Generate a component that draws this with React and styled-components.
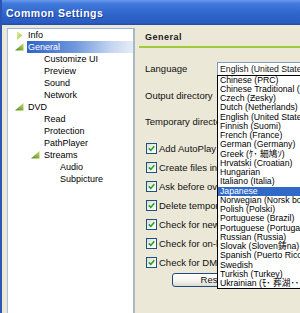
import React from "react";
import styled, { createGlobalStyle } from "styled-components";

const GlobalStyle = createGlobalStyle`
  html, body {
    margin: 0;
    padding: 0;
    background: #ebe8d7;
  }
  body {
    font-family: "Liberation Sans", "Noto Sans CJK JP", sans-serif;
  }
`;

const tree = [
  { label: "Info", level: 0, icon: "closed" },
  { label: "General", level: 0, icon: "open", selected: true },
  { label: "Customize UI", level: 1 },
  { label: "Preview", level: 1 },
  { label: "Sound", level: 1 },
  { label: "Network", level: 1 },
  { label: "DVD", level: 0, icon: "open" },
  { label: "Read", level: 1 },
  { label: "Protection", level: 1 },
  { label: "PathPlayer", level: 1 },
  { label: "Streams", level: 1, icon: "open" },
  { label: "Audio", level: 2 },
  { label: "Subpicture", level: 2 },
];

const languages = [
  "Chinese (PRC)",
  "Chinese Traditional (Taiwan)",
  "Czech (Ƶesky)",
  "Dutch (Netherlands)",
  "English (United States)",
  "Finnish (Suomi)",
  "French (France)",
  "German (Germany)",
  "Greek (ｹ･ 細鳩ｿ)",
  "Hrvatski (Croatian)",
  "Hungarian",
  "Italiano (Italia)",
  "Japanese",
  "Norwegian (Norsk bokmål)",
  "Polish (Polski)",
  "Portuguese (Brazil)",
  "Portuguese (Portugal)",
  "Russian (Russia)",
  "Slovak (Sloven鋳na)",
  "Spanish (Puerto Rico)",
  "Swedish",
  "Turkish (Turkey)",
  "Ukrainian (ﾓ･ 葬湖･･",
];

const checks = [
  "Add AutoPlay handler",
  "Create files in temporary directory",
  "Ask before overwriting",
  "Delete temporary files",
  "Check for new version",
  "Check for on-line updates",
  "Check for DMA",
];

const TreeIcon = ({ kind }) => {
  if (kind === "closed") {
    return (
      <svg width="6" height="9" viewBox="0 0 6 9">
        <defs>
          <linearGradient id="gClosed" x1="0" y1="0" x2="1" y2="1">
            <stop offset="0" stopColor="#e2eea8" />
            <stop offset="1" stopColor="#a6c640" />
          </linearGradient>
        </defs>
        <polygon points="0,0 5.5,4.5 0,9" fill="url(#gClosed)" />
      </svg>
    );
  }
  return (
    <svg width="9" height="8" viewBox="0 0 9 8">
      <defs>
        <linearGradient id="gOpen" x1="1" y1="0" x2="0" y2="1">
          <stop offset="0" stopColor="#c4dc70" />
          <stop offset="1" stopColor="#4f8a18" />
        </linearGradient>
      </defs>
      <polygon points="8.5,0 8.5,7.5 0,7.5" fill="url(#gOpen)" />
    </svg>
  );
};

const App = () => {
  return (
    <>
      <GlobalStyle />
      <Window>
        <TitleBar>Common Settings</TitleBar>
        <Body>
          <TreePanel>
            {tree.map((item) => (
              <TreeRow key={item.label} level={item.level}>
                <IconSlot>{item.icon && <TreeIcon kind={item.icon} />}</IconSlot>
                <TreeLabel selected={item.selected}>{item.label}</TreeLabel>
              </TreeRow>
            ))}
          </TreePanel>
          <Content>
            <Header>General</Header>
            <Rule />
            <Form>
              <FieldRow>
                <FieldLabel>Language</FieldLabel>
                <Combo>
                  English (United States)
                  <DropList>
                    {languages.map((lang) => (
                      <DropItem key={lang} selected={lang === "Japanese"}>
                        {lang}
                      </DropItem>
                    ))}
                  </DropList>
                </Combo>
              </FieldRow>
              <FieldRow>
                <FieldLabel>Output directory</FieldLabel>
              </FieldRow>
              <FieldRow>
                <FieldLabel>Temporary directory</FieldLabel>
              </FieldRow>
              <CheckList>
                {checks.map((c) => (
                  <CheckRow key={c}>
                    <Box>
                      <svg width="7" height="7" viewBox="0 0 7 7">
                        <path
                          d="M0.8 3.4 L2.8 5.4 L6.3 1.2"
                          fill="none"
                          stroke="#22a322"
                          strokeWidth="1.6"
                        />
                      </svg>
                    </Box>
                    <CheckText>{c}</CheckText>
                  </CheckRow>
                ))}
              </CheckList>
              <ResetButton>Reset</ResetButton>
            </Form>
          </Content>
        </Body>
      </Window>
    </>
  );
};

const Window = styled.div`
  width: 300px;
  height: 313px;
  overflow: hidden;
  box-sizing: border-box;
  border-left: 2px solid #2d53b5;
  background: #ebe8d7;
  display: flex;
  flex-direction: column;
`;

const TitleBar = styled.div`
  height: 25px;
  flex: none;
  display: flex;
  align-items: center;
  padding-left: 4px;
  color: #ffffff;
  font-size: 10.5px;
  font-weight: bold;
  letter-spacing: 0.5px;
  text-shadow: 1px 1px 0 #1b3f95;
  background: linear-gradient(
    to bottom,
    #6a9ae8 0%,
    #4079dc 15%,
    #2f65cc 55%,
    #2a5cc2 90%,
    #1f4aa8 100%
  );
`;

const Body = styled.div`
  flex: 1;
  display: flex;
  padding: 3px 0 0 5px;
  min-height: 0;
`;

const TreePanel = styled.div`
  width: 128px;
  flex: none;
  box-sizing: border-box;
  background: #ffffff;
  border-top: 1px solid #98b4dc;
  border-left: 1px solid #a6bee0;
  border-right: 2px solid #aab7c4;
  padding-top: 0;
`;

const TreeRow = styled.div`
  display: flex;
  align-items: center;
  height: 12px;
  padding-left: ${(p) => p.level * 16 + 4}px;
`;

const IconSlot = styled.div`
  width: 15px;
  flex: none;
  display: flex;
  justify-content: center;
  align-items: center;
`;

const TreeLabel = styled.div`
  flex: 1;
  height: 12px;
  line-height: 12px;
  padding-left: 1px;
  font-size: 9px;
  white-space: nowrap;
  color: ${(p) => (p.selected ? "#ffffff" : "#000000")};
  background: ${(p) =>
    p.selected
      ? "linear-gradient(to right, #2f63c8 0%, #6f97dc 45%, #c6d6f0 80%, #e4ecf8 100%)"
      : "transparent"};
`;

const Content = styled.div`
  flex: 1;
  min-width: 0;
  padding-left: 4px;
  display: flex;
  flex-direction: column;
`;

const Header = styled.div`
  height: 18px;
  display: flex;
  align-items: center;
  padding-left: 6px;
  font-size: 9px;
  font-weight: bold;
  letter-spacing: 0.5px;
  color: #1a1a1a;
`;

const Rule = styled.div`
  height: 2px;
  background: #9fcb3a;
`;

const Form = styled.div`
  padding: 14px 0 0 6px;
  display: flex;
  flex-direction: column;
  font-size: 9.5px;
  color: #111;
`;

const FieldRow = styled.div`
  display: flex;
  align-items: center;
  height: 13px;
  margin-bottom: 13.5px;
`;

const FieldLabel = styled.div`
  width: 72px;
  flex: none;
  overflow: hidden;
  white-space: nowrap;
`;

const Combo = styled.div`
  position: relative;
  width: 100px;
  flex: none;
  height: 14px;
  box-sizing: border-box;
  border: 1px solid #7f9db9;
  background: #ffffff;
  padding-left: 2px;
  font-size: 8.7px;
  line-height: 12px;
  white-space: nowrap;
`;

const DropList = styled.div`
  position: absolute;
  top: 100%;
  left: -1px;
  z-index: 2;
  width: 120px;
  border: 1px solid #000000;
  background: #ffffff;
  font-size: 8.7px;
`;

const DropItem = styled.div`
  height: 9.25px;
  line-height: 9.25px;
  padding-left: 2px;
  white-space: nowrap;
  color: ${(p) => (p.selected ? "#ffffff" : "#000000")};
  background: ${(p) => (p.selected ? "#3169c6" : "transparent")};
`;

const CheckList = styled.div`
  display: flex;
  flex-direction: column;
  gap: 6px;
`;

const CheckRow = styled.div`
  display: flex;
  align-items: center;
  height: 13px;
  white-space: nowrap;
`;

const Box = styled.div`
  width: 11px;
  height: 11px;
  margin-left: 1px;
  box-sizing: border-box;
  border: 1px solid #1c5180;
  background: linear-gradient(135deg, #dcdcd6 0%, #f6f6f3 60%, #ffffff 100%);
  display: flex;
  align-items: center;
  justify-content: center;
  flex: none;
`;

const CheckText = styled.span`
  margin-left: 2px;
`;

const ResetButton = styled.div`
  margin: 4px 0 0 27px;
  width: 82px;
  height: 14px;
  box-sizing: border-box;
  border: 1px solid #24487e;
  border-radius: 3px;
  background: linear-gradient(to bottom, #ffffff 0%, #f3f2ec 60%, #dcdacf 100%);
  display: flex;
  align-items: center;
  justify-content: center;
  font-size: 9.5px;
`;

export default App;
